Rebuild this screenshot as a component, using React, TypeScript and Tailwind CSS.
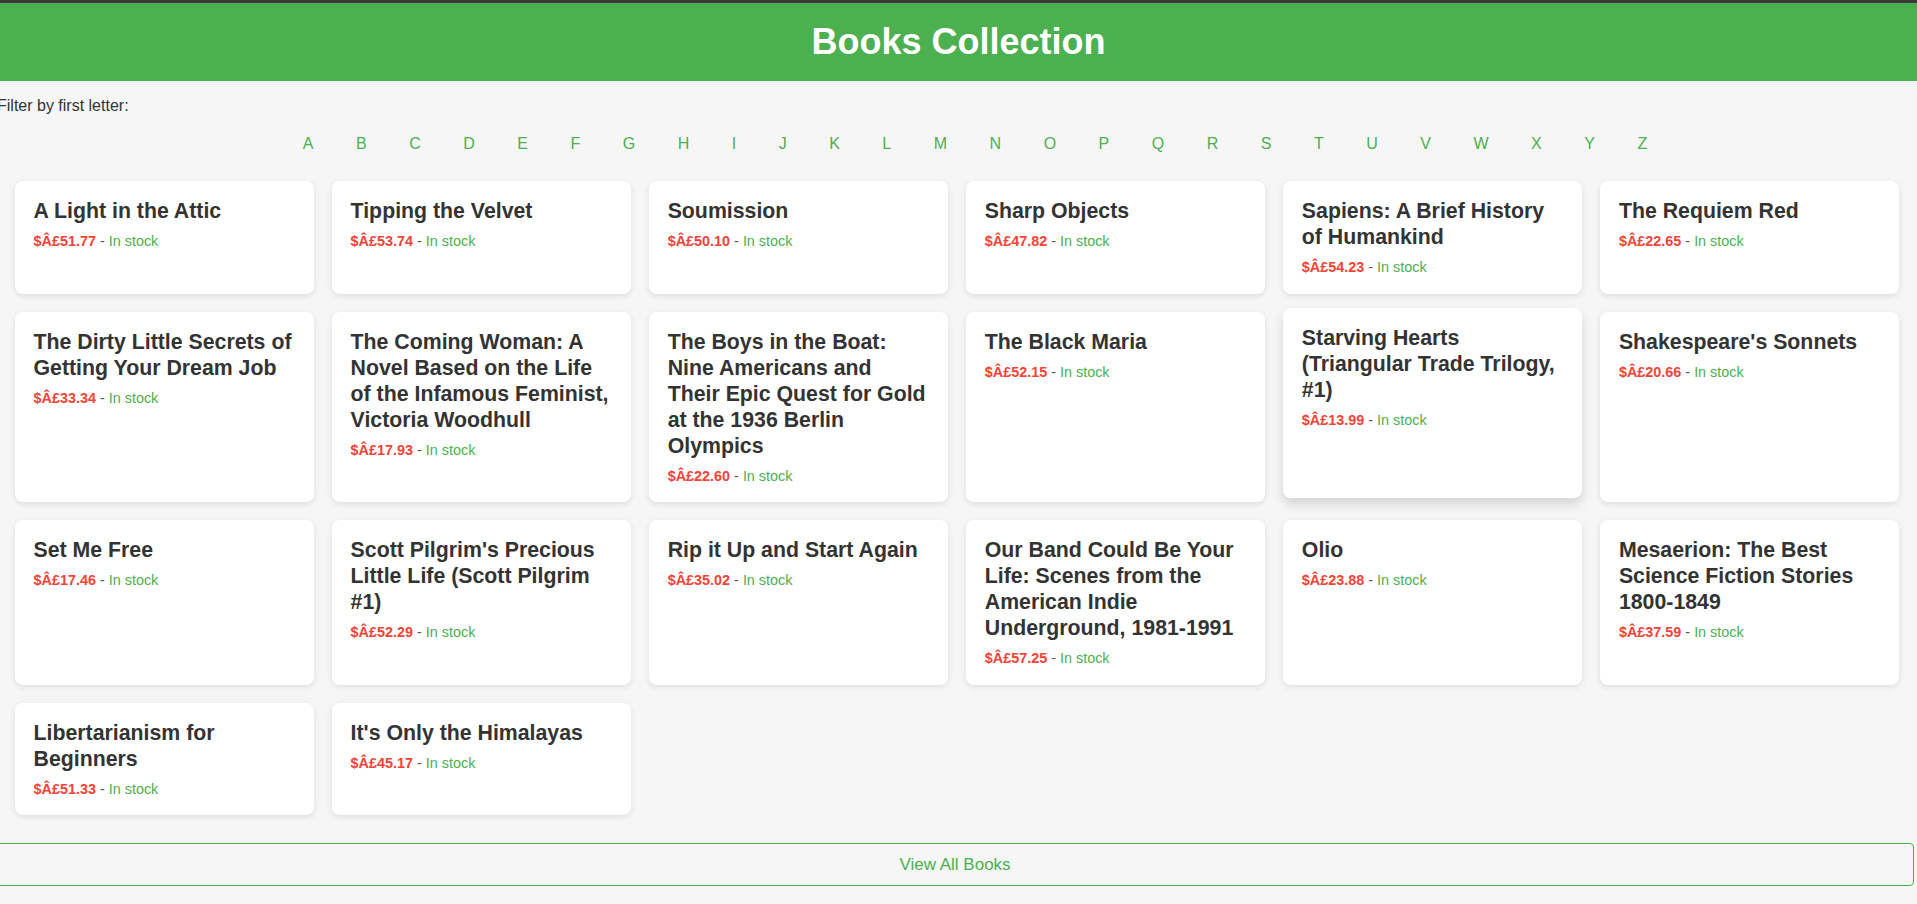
const books = [
  { title: 'A Light in the Attic', price: '51.77' },
  { title: 'Tipping the Velvet', price: '53.74' },
  { title: 'Soumission', price: '50.10' },
  { title: 'Sharp Objects', price: '47.82' },
  { title: 'Sapiens: A Brief History of Humankind', price: '54.23' },
  { title: 'The Requiem Red', price: '22.65' },
  { title: 'The Dirty Little Secrets of Getting Your Dream Job', price: '33.34' },
  { title: 'The Coming Woman: A Novel Based on the Life of the Infamous Feminist, Victoria Woodhull', price: '17.93' },
  { title: 'The Boys in the Boat: Nine Americans and Their Epic Quest for Gold at the 1936 Berlin Olympics', price: '22.60' },
  { title: 'The Black Maria', price: '52.15' },
  { title: 'Starving Hearts (Triangular Trade Trilogy, #1)', price: '13.99', hover: true },
  { title: "Shakespeare's Sonnets", price: '20.66' },
  { title: 'Set Me Free', price: '17.46' },
  { title: "Scott Pilgrim's Precious Little Life (Scott Pilgrim #1)", price: '52.29' },
  { title: 'Rip it Up and Start Again', price: '35.02' },
  { title: 'Our Band Could Be Your Life: Scenes from the American Indie Underground, 1981-1991', price: '57.25' },
  { title: 'Olio', price: '23.88' },
  { title: 'Mesaerion: The Best Science Fiction Stories 1800-1849', price: '37.59' },
  { title: 'Libertarianism for Beginners', price: '51.33' },
  { title: "It's Only the Himalayas", price: '45.17' },
]

const letters = 'ABCDEFGHIJKLMNOPQRSTUVWXYZ'.split('')

export default function App() {
  return (
    <div className="min-h-screen bg-[#f6f6f6] font-['Liberation_Sans',Arial,sans-serif] text-[#333] overflow-hidden">
      <div className="h-[3px] bg-[#3a3a3a]" />
      <header className="h-[78px] bg-[#4caf50] flex items-center justify-center">
        <h1 className="text-[36px] font-bold text-white leading-none">Books Collection</h1>
      </header>

      <div className="mt-[16px] -ml-[3px] text-[16px] leading-[18px] text-[#333]">Filter by first letter:</div>

      <div className="mt-[12px] flex justify-center pl-[33px]">
        {letters.map((l) => (
          <button key={l} className="px-[16px] mx-[5.25px] py-[8px] text-[16px] leading-[18px] text-[#4caf50]">
            {l}
          </button>
        ))}
      </div>

      {/* Books grid */}
      <div className="mt-[20px] grid grid-cols-6 gap-[18px] pl-[14.5px] pr-[18px]">
        {books.map((b) => (
          <div
            key={b.title}
            className={
              b.hover
                ? 'bg-white rounded-[8px] pt-[17px] pb-[18px] px-[19px] -translate-y-1 shadow-[0_6px_12px_rgba(0,0,0,0.14)]'
                : 'bg-white rounded-[8px] pt-[17px] pb-[18px] px-[19px] shadow-[0_2px_6px_rgba(0,0,0,0.1)]'
            }
          >
            <h3 className="text-[21.3px] leading-[26px] font-bold text-[#333]">{b.title}</h3>
            <p className="mt-[9px] text-[14.4px] leading-[16.5px]">
              <span className="font-bold text-[#f44336]">$Â£{b.price}</span>
              <span className="text-[#555]"> - </span>
              <span className="text-[#4caf50]">In stock</span>
            </p>
          </div>
        ))}
      </div>

      <div className="mt-[28px] -ml-[4px] mr-[3px] pb-[17px]">
        <button className="w-full h-[43px] border border-[#4caf50] rounded-[4px] text-[17px] text-[#4caf50] bg-transparent">
          View All Books
        </button>
      </div>
    </div>
  )
}
